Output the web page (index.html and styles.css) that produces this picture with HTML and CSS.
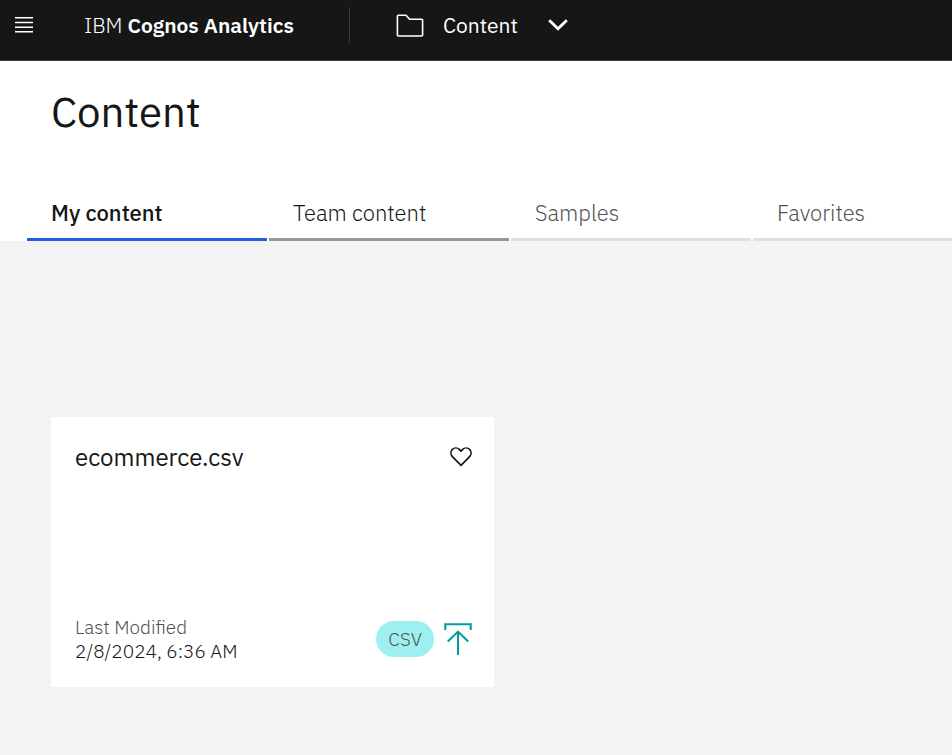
FILE: index.html
```html
<!DOCTYPE html>
<html lang="en">
<head>
<meta charset="utf-8">
<meta name="viewport" content="width=device-width, initial-scale=1">
<title>IBM Cognos Analytics</title>
<link rel="stylesheet" href="styles.css">
</head>
<body>
<header class="topbar">
  <button class="menu-button" type="button" aria-label="Open menu">
    <svg width="18" height="16" viewBox="0 0 18 16" fill="#fff"><path d="M0 0h18v1.5H0zM0 4.7h18v1.5H0zM0 9.4h18v1.5H0zM0 14.1h18v1.5H0z"/></svg>
  </button>
  <a class="brand" href="#">IBM <strong>Cognos Analytics</strong></a>
  <button class="switcher" type="button">
    <svg width="28" height="24" viewBox="0 0 28 24" fill="none" stroke="#fff" stroke-width="1.6" stroke-linejoin="round"><path d="M2.4 2.2H10L13.6 6.2H25.6Q26.6 6.2 26.6 7.2V22Q26.6 23 25.6 23H2.4Q1.4 23 1.4 22V3.2Q1.4 2.2 2.4 2.2Z"/></svg>
    <span class="switcher-label">Content</span>
    <svg width="20" height="12" viewBox="0 0 20 12" fill="none" stroke="#fff" stroke-width="2.8"><path d="M1.2 1.2 10 9.8 18.8 1.2"/></svg>
  </button>
</header>
<section class="heading">
  <h1 class="title">Content</h1>
  <nav class="tabs" role="tablist" aria-label="Content views">
    <button class="tab tab-selected" type="button" role="tab" aria-selected="true">My content</button>
    <button class="tab tab-hover" type="button" role="tab" aria-selected="false">Team content</button>
    <button class="tab" type="button" role="tab" aria-selected="false">Samples</button>
    <button class="tab" type="button" role="tab" aria-selected="false">Favorites</button>
  </nav>
</section>
<main class="files">
  <article class="card">
    <div class="card-top">
      <h2 class="file-name">ecommerce.csv</h2>
      <button class="favorite" type="button" aria-label="Add to favorites">
        <svg width="22" height="20" viewBox="0 0 22 20" fill="none" stroke="#161616" stroke-width="1.7" stroke-linejoin="round"><path d="M11 4.2 9.3 2.4A4.9 4.9 0 0 0 2.4 2.4 5.2 5.2 0 0 0 2.4 9.6L11 18.4 19.6 9.6A5.2 5.2 0 0 0 19.6 2.4 4.9 4.9 0 0 0 12.7 2.4Z"/></svg>
      </button>
    </div>
    <div class="card-bottom">
      <div class="modified">
        <span class="modified-label">Last Modified</span>
        <time datetime="2024-02-08T06:36">2/8/2024, 6:36 AM</time>
      </div>
      <div class="kind">
        <span class="tag">CSV</span>
        <svg width="28" height="34" viewBox="0 0 28 34" fill="none" stroke="#009d9a" stroke-width="2.1"><path d="M1.3 8V2.3H26.7V8M14 33V10M3.8 19.6 14 9.6 24.2 19.6"/></svg>
      </div>
    </div>
  </article>
</main>
</body>
</html>
```
FILE: styles.css
```css
* {
  box-sizing: border-box;
}

body {
  margin: 0;
  min-height: 100vh;
  background: #f3f3f3;
  color: #161616;
  font-family: "IBM Plex Sans", Roboto, "Liberation Sans", sans-serif;
  font-size: 21px;
}

button {
  margin: 0;
  padding: 0;
  border: 0;
  background: none;
  color: inherit;
  font: inherit;
  cursor: pointer;
}

svg {
  display: block;
  flex: none;
}

.topbar {
  display: flex;
  align-items: center;
  height: 61px;
  padding: 0 15px 11px;
  border-bottom: 1px solid #393939;
  background: #161616;
  color: #fff;
}

.brand {
  width: 266px;
  margin-left: 51px;
  color: inherit;
  font-weight: 300;
  line-height: 36px;
  text-decoration: none;
  white-space: nowrap;
  border-right: 1px solid #393939;
}

.brand strong {
  font-weight: 600;
}

.switcher {
  display: flex;
  align-items: center;
  margin-left: 46px;
}

.switcher-label {
  width: 77px;
  margin: 0 28px 0 19px;
  text-align: left;
}

.heading {
  padding: 24px 0 0 27px;
  background: #fff;
  overflow: hidden;
}

.title {
  margin: 0 24px 48px;
  font-size: 42px;
  font-weight: 400;
  line-height: 54px;
}

.tabs {
  display: flex;
  gap: 2px;
}

.tab {
  flex: 0 0 240px;
  height: 54px;
  padding: 0 24px;
  border-bottom: 3px solid #e0e0e0;
  color: #525252;
  font-size: 22px;
  font-weight: 300;
  text-align: left;
}

.tab-selected {
  border-color: #1f5fdb;
  color: #161616;
  font-weight: 500;
}

.tab-hover {
  border-color: #979797;
  color: #161616;
}

.files {
  display: grid;
  grid-template-columns: repeat(auto-fill, 443px);
  gap: 24px;
  padding: 176px 24px 24px 51px;
}

.card {
  display: flex;
  flex-direction: column;
  justify-content: space-between;
  min-height: 270px;
  padding: 24px 22px 24px 24px;
  background: #fff;
}

.card-top,
.card-bottom,
.kind {
  display: flex;
  align-items: center;
  justify-content: space-between;
}

.file-name {
  margin: 0;
  font-size: 24px;
  font-weight: 400;
  line-height: 32px;
}

.modified {
  display: flex;
  flex-direction: column;
  font-size: 19px;
  font-weight: 300;
  line-height: 24px;
}

.modified-label {
  color: #525252;
}

.kind {
  gap: 10px;
}

.tag {
  padding: 0 12px;
  border-radius: 18px;
  background: #9ef0f0;
  color: #525252;
  font-size: 19px;
  font-weight: 300;
  line-height: 36px;
}
```
